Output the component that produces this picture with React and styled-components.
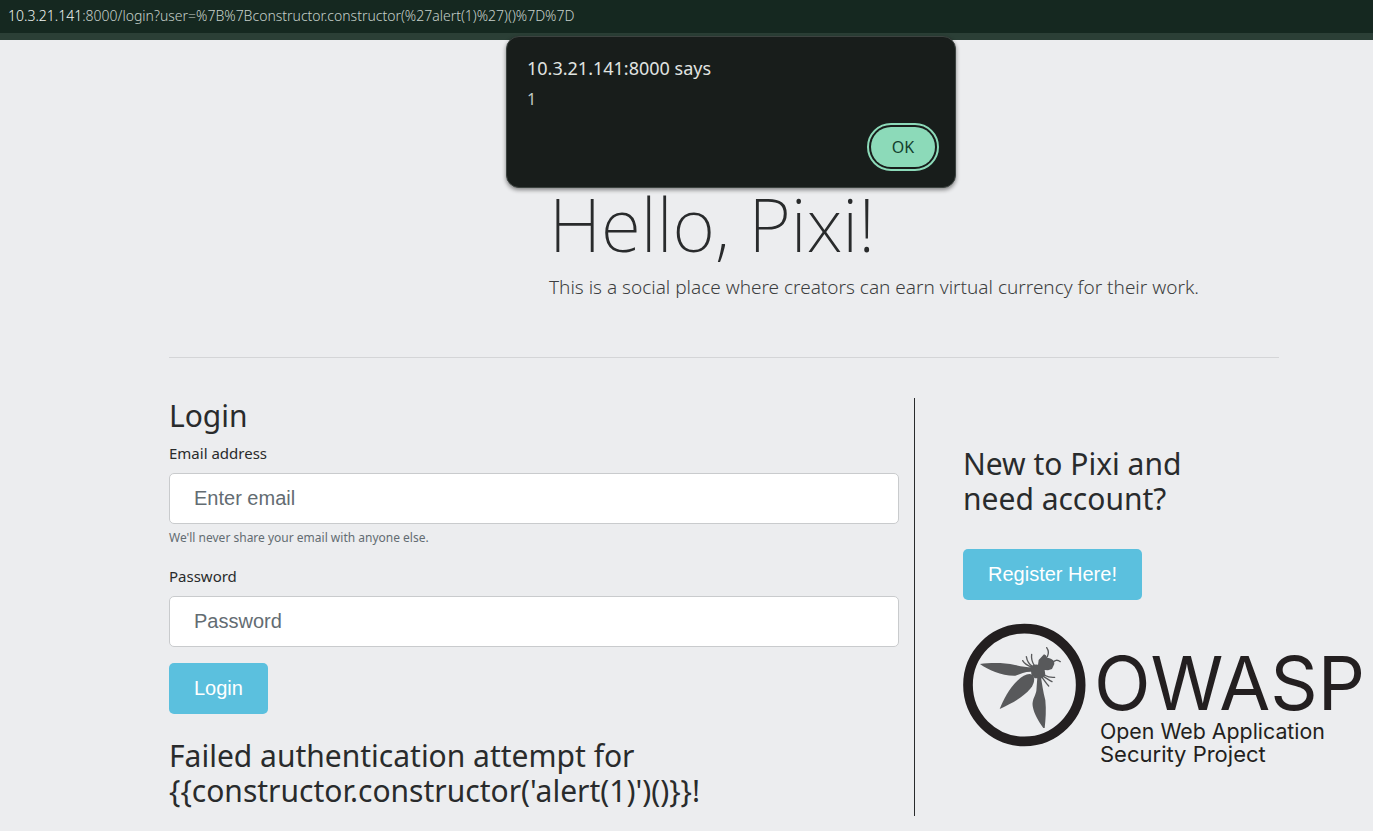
import React from "react";
import styled, { createGlobalStyle } from "styled-components";

const Global = createGlobalStyle`
  *, *::before, *::after { box-sizing: border-box; }
  body {
    margin: 0;
    background: #ecedef;
    color: #292b2c;
    font: 400 16px/24px "Noto Sans", sans-serif;
  }
`;

const AddressBar = styled.header`
  height: 40px;
  padding: 0 8px;
  background: #152820;
  border-bottom: 7px solid #2b3f36;
  color: #c6d0ca;
  font-size: 14px;
  font-weight: 300;
  line-height: 32px;
  white-space: nowrap;
  overflow: hidden;
`;

const Host = styled.span`
  color: #f0f5f2;
`;

const Dialog = styled.section`
  position: absolute;
  top: 36px;
  left: 506px;
  width: 450px;
  height: 152px;
  padding: 19px 20px;
  background: #181d1b;
  border: 1px solid #3c4340;
  border-radius: 13px;
  box-shadow: 0 2px 4px rgba(0, 0, 0, 0.45);
  color: #c2c9c5;
`;

const DialogTitle = styled.h2`
  margin: 0 0 7px;
  color: #e0e4e1;
  font-size: 18px;
  font-weight: 400;
  line-height: 24px;
`;

const DialogText = styled.p`
  margin: 0;
`;

const OkButton = styled.button`
  display: block;
  width: 64px;
  height: 40px;
  margin: 16px 0 0 auto;
  border: 0;
  border-radius: 20px;
  background: #8cdab9;
  color: #12402e;
  font: inherit;
  outline: 2px solid #8cdab9;
  outline-offset: 2px;
`;

const Page = styled.main`
  padding: 144px 94px 15px 169px;
`;

const Intro = styled.div`
  margin-left: calc((100% + 30px) / 3);
  height: 173px;
`;

const Title = styled.h1`
  margin: 0 0 8px;
  font-size: 73px;
  font-weight: 200;
  line-height: 80px;
`;

const Lead = styled.p`
  margin: 0;
  font-size: 19px;
  font-weight: 300;
  line-height: 30px;
  color: #3c3e40;
  white-space: nowrap;
`;

const Rule = styled.hr`
  margin: 0 0 40px;
  border: 0;
  border-top: 1px solid #d4d5d7;
`;

const Columns = styled.div`
  display: grid;
  grid-template-columns: 2fr 1fr;
  margin: 0 -15px;
`;

const LoginForm = styled.form`
  min-width: 0;
  padding: 0 15px;
`;

const Aside = styled.aside`
  min-width: 0;
  padding: 48px 15px 0 48px;
  border-left: 1px solid #292b2c;
`;

const Heading = styled.h2`
  margin: 0 0 8px;
  font-size: 30px;
  font-weight: 400;
  line-height: 35px;
`;

const Field = styled.div`
  margin-bottom: 16px;
`;

const Label = styled.label`
  display: block;
  margin-bottom: 8px;
  font-size: 15px;
`;

const Input = styled.input`
  display: block;
  width: 100%;
  height: 51px;
  padding: 12px 24px;
  border: 1px solid #c9cbcd;
  border-radius: 5px;
  background: #fff;
  color: #464a4c;
  font: 20px/25px "Liberation Sans", sans-serif;
  &::placeholder { color: #636c72; opacity: 1; }
`;

const Hint = styled.small`
  display: block;
  margin-top: 4px;
  color: #636c72;
  font-size: 12px;
  line-height: 20px;
`;

const Button = styled.button`
  display: block;
  height: 51px;
  margin-bottom: 24px;
  padding: 0 25px;
  border: 0;
  border-radius: 5px;
  background: #5bc0de;
  color: #fff;
  font: 20px/25px "Liberation Sans", sans-serif;
`;

const AsideHeading = styled(Heading)`
  margin-bottom: 33px;
`;

const Logo = styled.svg`
  display: block;
  width: 400px;
  height: 144px;
  overflow: visible;
`;

function OwaspLogo() {
  return (
    <Logo viewBox="9 12 1200 432" role="img" aria-label="OWASP">
      <circle cx="193" cy="195" r="169" fill="none" stroke="#231f20" strokeWidth="29" />
      <g fill="#58595b">
        <path d="M60 132C90 128 130 127 165 135C185 140 200 142 216 142L216 155C195 154 182 161 166 167C125 168 85 150 60 132Z" />
        <path d="M119 267C130 238 148 205 172 182C190 165 205 158 218 164C226 175 223 190 212 205C190 232 155 250 119 267Z" />
        <path d="M232 172H243C246 192 249 213 256 241C259 270 257 298 254 324H250C236 305 222 282 218 258C216 240 225 230 229 213Z" />
        <path d="M212 140Q222 131 234 134L236 120L252 103Q258 104 262 113Q276 115 282 124L283 132L276 147L264 151L254 150L256 165L247 175L224 175L214 162Z" />
      </g>
      <g fill="none" stroke="#58595b" strokeWidth="4" strokeLinecap="round">
        <path d="M262 110C268 98 265 90 260 83M278 128C284 120 292 118 301 125" />
        <path d="M216 142C205 138 194 132 188 122M218 140C208 134 201 122 199 110M224 138C217 128 213 116 215 103" />
        <path d="M252 165C262 170 270 174 284 172M250 169C262 177 268 181 276 185M246 172C253 182 258 190 266 198" />
      </g>
      <g fill="#231f20" fontFamily="Inter, sans-serif">
        <text x="402" y="269" fontSize="222">OWASP</text>
        <text x="420" y="357" fontSize="64">Open Web Application</text>
        <text x="420" y="426" fontSize="66">Security Project</text>
      </g>
    </Logo>
  );
}

export default function App() {
  return (
    <>
      <Global />
      <AddressBar>
        <Host>10.3.21.141</Host>:8000/login?user=%7B%7Bconstructor.constructor(%27alert(1)%27)()%7D%7D
      </AddressBar>
      <Dialog role="alertdialog" aria-labelledby="dialog-title">
        <DialogTitle id="dialog-title">10.3.21.141:8000 says</DialogTitle>
        <DialogText>1</DialogText>
        <OkButton type="button">OK</OkButton>
      </Dialog>
      <Page>
        <Intro>
          <Title>Hello, Pixi!</Title>
          <Lead>This is a social place where creators can earn virtual currency for their work.</Lead>
        </Intro>
        <Rule />
        <Columns>
          <LoginForm onSubmit={(e) => e.preventDefault()}>
            <Heading>Login</Heading>
            <Field>
              <Label htmlFor="email">Email address</Label>
              <Input id="email" type="email" placeholder="Enter email" />
              <Hint>We'll never share your email with anyone else.</Hint>
            </Field>
            <Field>
              <Label htmlFor="password">Password</Label>
              <Input id="password" type="password" placeholder="Password" />
            </Field>
            <Button type="submit">Login</Button>
            <Heading>
              Failed authentication attempt for
              <br />
              {"{{constructor.constructor('alert(1)')()}}!"}
            </Heading>
          </LoginForm>
          <Aside>
            <AsideHeading>
              New to Pixi and
              <br />
              need account?
            </AsideHeading>
            <Button type="button">Register Here!</Button>
            <OwaspLogo />
          </Aside>
        </Columns>
      </Page>
    </>
  );
}
